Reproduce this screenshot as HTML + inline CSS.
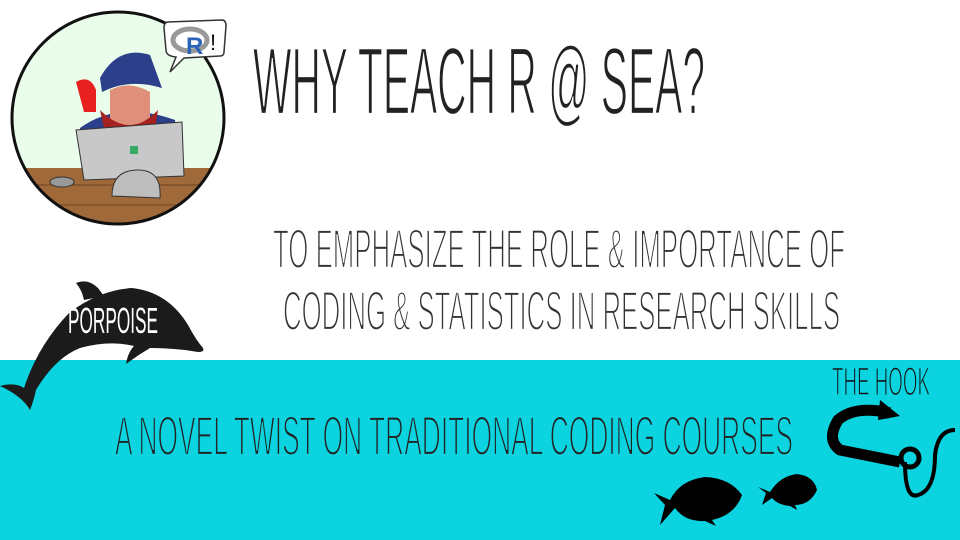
<!DOCTYPE html>
<html><head><meta charset="utf-8"><style>
html,body{margin:0;padding:0;width:960px;height:540px;overflow:hidden;background:#fff}
svg{display:block}
text{font-family:"Liberation Sans Narrow","Liberation Sans",sans-serif;text-transform:uppercase}
.tw{stroke:#fff;stroke-width:2.2px}
.tc{stroke:#0bd3e0;stroke-width:2.2px}
</style></head><body>
<svg width="960" height="540" viewBox="0 0 960 540">
<rect x="0" y="360" width="960" height="180" fill="#0bd3e0"/>
<defs><clipPath id="c"><circle cx="118" cy="118" r="106"/></clipPath></defs>
<circle cx="118" cy="118" r="106" fill="#eafcea"/>
<g clip-path="url(#c)">
<rect x="0" y="168" width="240" height="60" fill="#a0693a"/>
<path d="M0 185H240M0 205H240" stroke="#6b4424" stroke-width="1"/>
<path d="M80 128 Q118 100 175 120 L178 170 L82 170Z" fill="#2c3f8a"/>
<path d="M100 78 Q118 45 150 55 L162 88 Q130 78 102 92Z" fill="#2c3f8a"/>
<path d="M110 90 Q130 80 150 92 L150 125 Q130 140 110 125Z" fill="#e0907a"/>
<path d="M100 110 Q130 140 158 110 L155 130 Q130 150 105 132Z" fill="#a52020"/>
<path d="M76 82 Q90 74 96 90 L96 112 L84 112Z" fill="#e82020"/>
<path d="M76 130 L182 122 L184 176 L84 180Z" fill="#c8c8c8" stroke="#333" stroke-width="1"/>
<path d="M112 196 Q112 170 138 170 Q162 170 160 198Z" fill="#bdbdbd" stroke="#333" stroke-width="1"/>
<ellipse cx="62" cy="182" rx="12" ry="5" fill="#999" stroke="#333"/>
<rect x="130" y="146" width="8" height="8" fill="#3a6"/>
</g>
<circle cx="118" cy="118" r="106" fill="none" stroke="#111" stroke-width="3"/>
<path d="M168 22 L222 20 Q226 20 226 26 L224 52 Q224 56 220 56 L184 58 L170 72 L176 57 Q166 56 166 50 L164 28 Q164 22 168 22Z" fill="#fff" stroke="#333" stroke-width="1.5"/>
<ellipse cx="190" cy="40" rx="17" ry="11" fill="none" stroke="#999" stroke-width="5"/>
<text x="186" y="54" style="font-family:'Liberation Sans';font-weight:bold" font-size="24" fill="#2a64b8">R</text>
<text x="210" y="50" font-size="22" fill="#111">!</text>

<text class="tw" x="253" y="114" font-size="96" fill="#222" textLength="452" lengthAdjust="spacingAndGlyphs">Why Teach R @ Sea?</text>
<text class="tw" x="273" y="268" font-size="56" fill="#333" textLength="572" lengthAdjust="spacingAndGlyphs">To emphasize the role &amp; importance of</text>
<text class="tw" x="283" y="330" font-size="56" fill="#333" textLength="557" lengthAdjust="spacingAndGlyphs">coding &amp; statistics in research skills</text>
<text class="tc" x="115" y="455" font-size="56" fill="#222" textLength="678" lengthAdjust="spacingAndGlyphs">A novel twist on traditional coding courses</text>
<text class="tc" x="832" y="395" font-size="40" fill="#111" textLength="98" lengthAdjust="spacingAndGlyphs" style="stroke-width:1.5px">The Hook</text>

<path d="M0 386 Q15 382 24 388 Q38 345 70 312 Q100 290 132 288 Q168 292 188 325 Q196 340 203 348 Q205 352 198 352 L185 350 Q165 348 150 348 Q138 355 126 364 Q128 352 134 346 Q110 340 80 348 Q55 358 36 390 Q34 400 30 410 Q22 396 0 386Z" fill="#1b1b1b"/>
<path d="M76 283 Q88 278 98 288 L104 296 L84 300 Q82 290 76 283Z" fill="#1b1b1b"/>
<text x="68" y="333" font-size="36" fill="#fff" textLength="90" lengthAdjust="spacingAndGlyphs">Porpoise</text>

<path d="M654 493 L670 500 Q680 480 705 477 Q730 478 742 495 Q735 515 712 520 L716 526 L705 521 Q685 522 675 508 L660 525 L665 505Z" fill="#000"/>
<path d="M758 487 L770 492 Q780 476 797 474 Q814 476 817 490 Q810 505 795 505 L797 510 L790 506 Q778 505 772 498 L762 505 L766 493Z" fill="#000"/>
<path d="M890 413 Q855 405 838 420 Q826 440 840 450 L900 462" fill="none" stroke="#000" stroke-width="11"/>
<path d="M880 400 L900 416 L878 420Z" fill="#000"/>
<circle cx="910" cy="458" r="9" fill="none" stroke="#000" stroke-width="5"/>
<path d="M905 462 Q905 500 918 495 Q935 490 935 455 Q938 430 955 430" fill="none" stroke="#000" stroke-width="4"/>
</svg>
</body></html>
